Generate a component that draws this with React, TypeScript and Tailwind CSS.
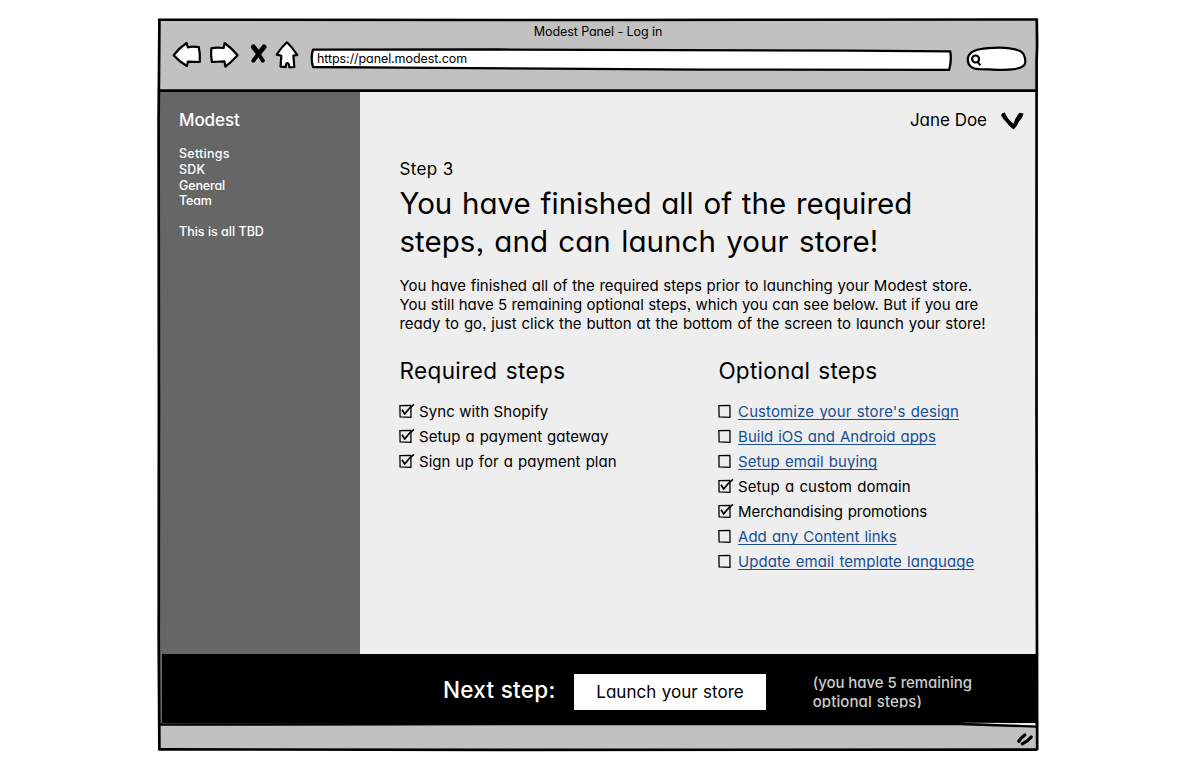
import { ReactNode } from "react";

type Step = { label: string; done?: boolean; spacing: string };

const requiredSteps: Step[] = [
  { label: "Sync with Shopify", done: true, spacing: "tracking-[0.08px]" },
  { label: "Setup a payment gateway", done: true, spacing: "[word-spacing:0.8px]" },
  { label: "Sign up for a payment plan", done: true, spacing: "[word-spacing:0.95px]" },
];

const optionalSteps: Step[] = [
  { label: "Customize your store's design", spacing: "tracking-[0.1px] [word-spacing:1px]" },
  { label: "Build iOS and Android apps", spacing: "[word-spacing:0.7px]" },
  { label: "Setup email buying", spacing: "tracking-[0.08px] [word-spacing:0.8px]" },
  { label: "Setup a custom domain", done: true, spacing: "tracking-[0.05px] [word-spacing:1px]" },
  { label: "Merchandising promotions", done: true, spacing: "tracking-[-0.06px] [word-spacing:0.6px]" },
  { label: "Add any Content links", spacing: "[word-spacing:0.86px]" },
  { label: "Update email template language", spacing: "tracking-[0.03px] [word-spacing:1px]" },
];

function BackIcon() {
  return (
    <svg className="h-[30px] w-[32px]" viewBox="171 39 32 30" fill="#fff" stroke="#000" strokeWidth="2.2" strokeLinejoin="round">
      <path d="M173.7 55.2 Q179 48 186.6 43 L187.8 47.3 Q193 46.2 198.8 47.2 Q200.4 54 199.8 62 L188 61.6 L186.9 66 Q179 61.5 173.7 55.2Z" />
    </svg>
  );
}

function ForwardIcon() {
  return (
    <svg className="h-[30px] w-[32px]" viewBox="208 39 32 30" fill="#fff" stroke="#000" strokeWidth="2.2" strokeLinejoin="round">
      <path d="M211.3 48.3 Q217 47 223.6 48 L224.6 43 Q232 48.5 237.6 55.3 Q231 62.5 225.4 66.7 L224.4 61.3 L211.9 62 Q210.6 55 211.3 48.3Z" />
    </svg>
  );
}

function StopIcon() {
  return (
    <svg className="h-[24px] w-[20px]" viewBox="248 42 20 24" fill="none" stroke="#000" strokeLinecap="round">
      <path strokeWidth="5" d="M253.4 47 L258.2 53 M264 47 L259.2 53" />
      <path strokeWidth="4" d="M257.6 52.5 L262.8 60.6 M259.4 52.5 L253.4 60.6" />
    </svg>
  );
}

function HomeIcon() {
  return (
    <svg className="h-[30px] w-[26px]" viewBox="274 39 26 30" fill="#fff" stroke="#000" strokeWidth="2.2" strokeLinejoin="round">
      <path d="M287 42.2 Q292.5 47.5 297.3 55 L293.4 55.6 L294.3 67 L289.4 67.3 L288.7 64 Q287.2 62.4 286.1 64 L285.7 67.2 L280.5 66.6 L281.3 55.8 L276.7 54.6 Q281 47.5 287 42.2Z" />
    </svg>
  );
}

function Checkbox({ done }: { done?: boolean }) {
  return (
    <svg className="h-[16px] w-[17px] shrink-0" viewBox="0 0 17 16" fill="none" stroke="#000">
      <path strokeWidth="1.3" d="M0.8 2.6 L12.2 2.3 M11.9 2.3 L12 14.2 M0.9 2 L1.1 14.4 M0.7 13.9 L12.6 14.3" />
      {done && <path strokeWidth="1.7" strokeLinejoin="round" d="M3 6.8 L5.7 11 Q9.6 5.4 15 1.4" />}
    </svg>
  );
}

function StepList({ title, spacing, steps }: { title: string; spacing: string; steps: Step[] }) {
  return (
    <section>
      <h2 className={"text-[22.5px] leading-[28px] " + spacing}>{title}</h2>
      <ul className="mt-[14px] text-[15px] leading-[25px]">
        {steps.map((s) => (
          <li key={s.label} className="flex h-[25px] items-center whitespace-pre">
            <Checkbox done={s.done} />
            {s.done ? (
              <span className={"ml-[2.7px] " + s.spacing}>{s.label}</span>
            ) : (
              <a className={"ml-[2.7px] text-[#174f92] underline decoration-1 underline-offset-[2px] [text-decoration-skip-ink:none] " + s.spacing}>
                {s.label}
              </a>
            )}
          </li>
        ))}
      </ul>
    </section>
  );
}

function Line({ className = "", children }: { className?: string; children: ReactNode }) {
  return <span className={"block whitespace-pre " + className}>{children}</span>;
}

function WindowFrame() {
  return (
    <svg className="pointer-events-none absolute inset-0 h-full w-full" viewBox="157 17 882 735" fill="none" stroke="#000" strokeLinecap="round" strokeLinejoin="round">
      <path d="M959 722.8 L1035 723 L1035 725.4 Z" fill="#eee" stroke="none" />
      <path strokeWidth="2.5" d="M159 19.8 L600 20 L1037 19.6" />
      <path strokeWidth="2.7" d="M159.4 20 L159.2 50 L158.6 120 L158.9 400 L158.7 640 L159.4 749" />
      <path strokeWidth="2.7" d="M1036.8 20 L1037.1 45 L1036.6 60 L1036.5 400 L1037.2 749" />
      <path strokeWidth="2.7" d="M159.5 90.7 L1036.5 90.7" />
      <path strokeWidth="2.4" d="M159.5 724.6 L400 724.2 L960 724 L1036.5 726.6" />
      <path strokeWidth="2.6" d="M159.5 749.4 L500 749.9 L1036.5 749.6" />
      <path strokeWidth="3.3" d="M1018.8 741.2 Q1020.4 738 1024.8 735 M1022.4 743.8 Q1027.5 741.6 1031.2 737" />
    </svg>
  );
}

export default function App() {
  return (
    <div className="h-[771px] w-[1200px] bg-white pl-[157px] pt-[17px] font-['Inter','Noto_Sans',sans-serif] text-black [font-feature-settings:'cv11','ss03']">
      <div className="relative flex h-[735px] w-[882px] flex-col px-[3px] pb-[3px] pt-[3px]">
        <header className="h-[72px] bg-[#c1c1c1]">
          <div className="flex h-[20px] justify-center text-[12.5px] leading-[23px] tracking-[-0.08px]">
            <span className="whitespace-pre">Modest Panel - Log in</span>
          </div>
          <div className="flex h-[30px] pl-[11px]">
            <div className="-mt-px flex">
              <BackIcon />
              <div className="ml-[5px]"><ForwardIcon /></div>
              <div className="ml-[8px] mt-[3px]"><StopIcon /></div>
              <div className="ml-[6px]"><HomeIcon /></div>
            </div>
            <div className="relative ml-[9px] mt-[6px] h-[26px] w-[644px]">
              <svg className="absolute inset-0 h-full w-full" viewBox="309 46 644 26" fill="#fff" stroke="#000" strokeWidth="2.3" strokeLinejoin="round">
                <path d="M313 49.6 L500 49.5 L850 50.6 L950.2 51.4 Q951.8 60 949.2 69.8 L700 69.6 L400 67.6 L313 67 Q310.4 58 313 49.6Z" />
              </svg>
              <span className="relative block whitespace-pre pl-[8px] text-[12.5px] leading-[26px] tracking-[-0.08px]">https://panel.modest.com</span>
            </div>
            <svg className="ml-[12px] mt-[4px] h-[30px] w-[64px]" viewBox="965 44 64 30" fill="#fff" stroke="#000" strokeWidth="2.2">
              <path d="M967.8 59 C968.5 51 977 49.2 988 48.2 C1000 47 1013 48 1020 51 C1025.5 53.5 1025.3 59 1025.3 62 C1025.5 66.5 1020 68.4 1012 69.4 C1003 70.6 992 69.2 979 69.2 C972 69 967.5 65.5 967.8 59Z" />
              <circle cx="975.6" cy="59" r="3.5" strokeWidth="2.2" />
              <path d="M977.4 61.6 L980.4 65.4" strokeWidth="2.2" />
            </svg>
          </div>
        </header>

        <div className="flex h-[562px]">
          <aside className="w-[200px] bg-[#666] pl-[19px] pt-[16px] font-medium text-white">
            <div className="text-[17px] leading-6 tracking-[-0.1px]">Modest</div>
            <nav className="mt-[14px] text-[12.5px] leading-[16px]">
              <Line className="tracking-[0.25px]">Settings</Line>
              <Line className="tracking-[0.2px]">SDK</Line>
              <Line className="tracking-[-0.15px]">General</Line>
              <Line className="-mt-px tracking-[-0.15px]">Team</Line>
              <Line className="mt-[15px]">This is all TBD</Line>
            </nav>
          </aside>

          <main className="flex-1 bg-[#eee] pl-[39.4px] pt-[16px]">
            <div className="flex h-6 items-center justify-end pr-[12px]">
              <span className="whitespace-pre text-[17px] leading-6 tracking-[-0.02px]">Jane Doe</span>
              <svg className="ml-[13px] h-[20px] w-[24px]" viewBox="1000 109 24 20">
                <path d="M1001 114.2 Q1001.8 111.4 1004.8 111.6 Q1007.6 118.4 1013.4 122.8 Q1016 115.6 1019.4 111.8 L1023.6 112.4 Q1022.8 116.4 1019 120.4 Q1017.2 125.2 1013.5 128.6 Q1009.6 126 1006.6 121.6 Q1003.2 118.4 1001 114.2Z" />
              </svg>
            </div>
            <div className="mt-[25px] text-[17px] leading-6 tracking-[0.4px]">Step 3</div>
            <h1 className="mt-[3px] text-[29.5px] leading-[38px]">
              <Line className="[word-spacing:1.5px]">You have finished all of the required</Line>
              <Line className="tracking-[0.05px] [word-spacing:2px]">steps, and can launch your store!</Line>
            </h1>
            <p className="mt-[16px] text-[15px] leading-[19px]">
              <Line className="[word-spacing:0.5px]">You have finished all of the required steps prior to launching your Modest store.</Line>
              <Line className="[word-spacing:0.13px]">You still have 5 remaining optional steps, which you can see below. But if you are</Line>
              <Line className="[word-spacing:0.66px]">ready to go, just click the button at the bottom of the screen to launch your store!</Line>
            </p>
            <div className="mt-[23.5px] grid grid-cols-[319px_1fr]">
              <StepList title="Required steps" spacing="tracking-[0.4px] [word-spacing:1.6px]" steps={requiredSteps} />
              <StepList title="Optional steps" spacing="tracking-[0.26px] [word-spacing:1.4px]" steps={optionalSteps} />
            </div>
          </main>
        </div>

        <footer className="h-[70px] bg-[#666] pl-[2px]">
          <div className="flex h-[69px] bg-black pl-[281px] text-white">
            <div className="w-[131px] whitespace-pre pt-[21.5px] text-[22.5px] font-medium leading-[28px] tracking-[0.27px]">Next step:</div>
            <button className="mt-[20px] flex h-[36px] w-[192px] justify-center bg-white pt-[6px] text-[17px] leading-6 tracking-[0.05px] text-black [word-spacing:0.4px]">
              Launch your store
            </button>
            <div className="ml-[46.7px] mt-[19px] h-[35px] overflow-hidden text-[15px] font-medium leading-[19px] text-[#ccc]">
              <Line className="tracking-[-0.06px]">(you have 5 remaining</Line>
              <Line className="tracking-[0.1px] [word-spacing:0.8px]">optional steps)</Line>
            </div>
          </div>
        </footer>
        <div className="flex-1 bg-[#c1c1c1]" />
        <WindowFrame />
      </div>
    </div>
  );
}
